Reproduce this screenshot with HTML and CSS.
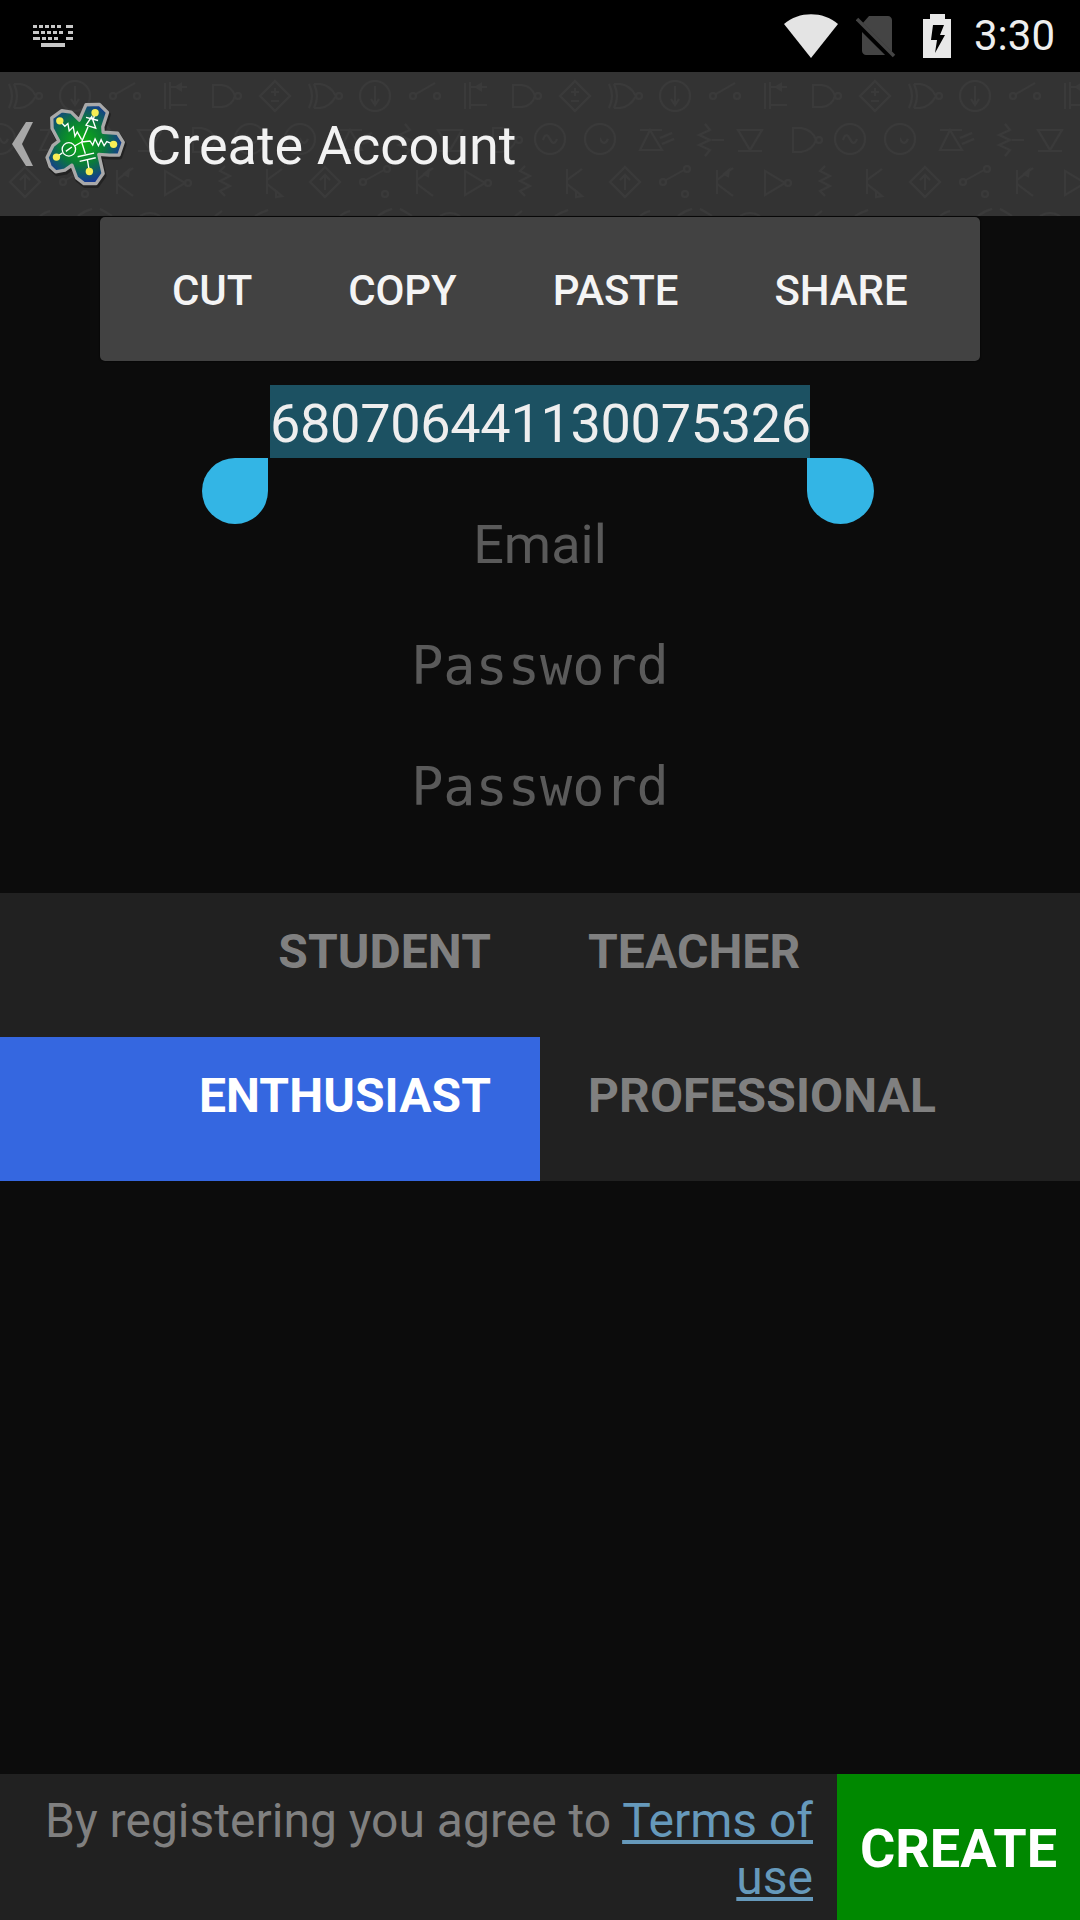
FILE: index.html
```html
<!DOCTYPE html>
<html lang="en">
<head>
<meta charset="utf-8">
<title>Create Account</title>
<link rel="stylesheet" href="styles.css">
</head>
<body>
<div class="screen">
  <div class="statusbar">
    <svg class="kbd" viewBox="0 0 40 22" width="40" height="22"><g fill="#c8c8c8"><rect x="0" y="0" width="4" height="3"/><rect x="6" y="0" width="4" height="3"/><rect x="12" y="0" width="4" height="3"/><rect x="18" y="0" width="4" height="3"/><rect x="24" y="0" width="4" height="3"/><rect x="33" y="0" width="7" height="3"/><rect x="0" y="6" width="6" height="3"/><rect x="8" y="6" width="4" height="3"/><rect x="14" y="6" width="4" height="3"/><rect x="20" y="6" width="4" height="3"/><rect x="26" y="6" width="4" height="3"/><rect x="35" y="6" width="5" height="3"/><rect x="0" y="12" width="7" height="3"/><rect x="9" y="12" width="4" height="3"/><rect x="15" y="12" width="4" height="3"/><rect x="21" y="12" width="4" height="3"/><rect x="33" y="12" width="7" height="3"/><rect x="8" y="18" width="24" height="4"/></g></svg>
    <div class="status-right">
      <svg class="wifi" viewBox="0 0 54 44" width="54" height="44"><path d="M0 10C15-3 39-3 54 10L27 44Z" fill="#e4e4e4"/></svg>
      <svg class="nosim" viewBox="0 0 40 42" width="40" height="42"><path d="M13 0H32C34 0 36 2 36 4V35C36 37 34 39 32 39H10C8 39 6 37 6 35V8Z" fill="#444"/><path d="M-1 4L37 42" stroke="#000" stroke-width="7"/><path d="M1 3L38 40" stroke="#444" stroke-width="3.500"/></svg>
      <svg class="batt" viewBox="0 0 28 44" width="28" height="44"><path d="M7 0H22V5H28V44H0V5H7Z" fill="#e8e8e8"/><path d="M10 11H21L17 21H22L12 39L14 26H8Z" fill="#000"/></svg>
      <span class="clock">3:30</span>
    </div>
  </div>

  <header class="appbar">
    <svg class="pattern" width="1080" height="144" viewBox="0 0 1080 144">
      <defs>
        <pattern id="circuit" width="300" height="144" patternUnits="userSpaceOnUse">
          <g fill="none" stroke="#3a3a3a" stroke-width="2">
            <!-- row 1 -->
            <path d="M9 12Q15 24 9 36M14 12Q20 24 14 36M14 12H20Q30 13 36 24Q30 35 20 36H14"/><circle cx="39" cy="24" r="3"/>
            <circle cx="75" cy="24" r="15"/><path d="M75 14V33M71 27L75 33L79 27"/>
            <circle cx="113" cy="24" r="3"/><path d="M116 22L135 11"/><circle cx="137" cy="24" r="3"/>
            <path d="M165 11V37M170 10V37M170 15H187M170 33H187M176 15L181 12V18Z"/>
            <path d="M213 13H222Q232 14 235 24Q232 34 222 35H213Z"/><circle cx="238" cy="24" r="3"/>
            <path d="M275 9L290 24L275 39L260 24ZM271 20H279M275 16V24M271 29H279"/>
            <!-- row 2 -->
            <circle cx="0" cy="67" r="15"/><circle cx="300" cy="67" r="15"/><path d="M-8 68Q-4 59 0 67T8 67"/>
            <path d="M243 68Q246 59 250 67T257 67"/><circle cx="250" cy="67" r="15"/>
            <path d="M40 78H62L50 58ZM40 58H62M60 66L72 61M62 72L74 67" />
            <path d="M105 52L110 58L99 63L110 68L99 73L110 78L105 84M112 68H124"/>
            <path d="M138 58H162L150 78ZM138 79H162"/>
            <path d="M193 56H201Q213 58 216 68Q213 78 201 80H193Z"/><circle cx="219" cy="68" r="3"/>
            <!-- row 3 -->
            <path d="M267 97V122M267 108L282 97M267 112L282 124M276 119L282 124L276 125Z"/>
            <path d="M25 95L40 110L25 125L10 110ZM25 118V103M20 108L25 103L30 108"/>
            <circle cx="63" cy="110" r="3"/><path d="M66 108L84 98"/><circle cx="87" cy="97" r="3"/><circle cx="85" cy="122" r="3"/>
            <path d="M117 98V122M117 108L133 96M117 112L133 124M124 102L129 98L128 104Z"/>
            <path d="M165 99V123L185 111Z"/><circle cx="188" cy="111" r="3"/>
            <path d="M225 94L220 99L230 104L220 109L230 114L220 119L225 124"/>
            <!-- row 4 -->
            <path d="M40 144Q45 140 50 139M78 144Q84 139 92 137M100 137Q106 140 112 144M140 144Q150 138 160 144M215 144L222 139M255 144Q262 140 268 138"/>
          </g>
        </pattern>
        <radialGradient id="logofill" gradientUnits="userSpaceOnUse" cx="245" cy="215" r="120">
          <stop offset="0" stop-color="#0fb50f"/><stop offset=".55" stop-color="#0a7d38"/><stop offset="1" stop-color="#153a90"/>
        </radialGradient>
      </defs>
      <rect width="1080" height="144" fill="url(#circuit)"/>
    </svg>
    <svg class="chevron" viewBox="0 0 21 44" width="21" height="44"><path d="M21 0H14L0 22L14 44H21L10 22Z" fill="#a8a8a8"/></svg>
    <svg class="logo" viewBox="130 90 250 262" width="84" height="88">
      <polygon class="logo-shadow" points="258,104 298,103 322,127 308,170 309,186 352,189 369,216 356,254 328,254 296,252 309,309 288,339 252,339 230,322 216,284 195,299 168,304 151,288 142,261 160,225 177,212 157,175 156,143 186,122 214,126 238,150"/>
      <polygon class="logo-body" points="258,104 298,103 322,127 308,170 309,186 352,189 369,216 356,254 328,254 296,252 309,309 288,339 252,339 230,322 216,284 195,299 168,304 151,288 142,261 160,225 177,212 157,175 156,143 186,122 214,126 238,150"/>
      <g class="logo-trace">
        <path d="M245 208L232 185L225 198L220 170L208 182L204 160L195 168L180 152"/>
        <path d="M258 165L275 140L287 174ZM258 142L294 151M245 215L264 170M280 148L285 128"/>
        <path d="M245 215L270 212L278 224L285 206L295 226L303 208L312 226L320 214L340 222"/>
        <circle cx="207" cy="237" r="20"/>
        <path d="M170 260L188 247M224 227L245 215M198 243L216 230"/>
        <path d="M245 215L256 250M233 259L282 248M239 273L287 262M262 267L268 303"/>
      </g>
      <g class="logo-dots"><circle cx="180" cy="152" r="11"/><circle cx="285" cy="128" r="11"/><circle cx="340" cy="222" r="11"/><circle cx="268" cy="303" r="11"/><circle cx="170" cy="260" r="11"/></g>
    </svg>
    <h1 class="title">Create Account</h1>
  </header>

  <main class="content">
    <div class="toolbar">
      <span class="tool">CUT</span>
      <span class="tool">COPY</span>
      <span class="tool">PASTE</span>
      <span class="tool">SHARE</span>
    </div>
    <form class="fields">
      <div class="field field-selected">
        <span class="selection">680706441130075326<i class="handle handle-left"></i><i class="handle handle-right"></i></span>
      </div>
      <div class="field hint">Email</div>
      <div class="field hint mono">Password</div>
      <div class="field hint mono">Password</div>
    </form>
    <div class="roles">
      <div class="role role-left">STUDENT</div>
      <div class="role role-right">TEACHER</div>
      <div class="role role-left role-on">ENTHUSIAST</div>
      <div class="role role-right">PROFESSIONAL</div>
    </div>
  </main>

  <footer class="footer">
    <p class="terms">By registering you agree to <a class="terms-link">Terms of use</a></p>
    <div class="create">CREATE</div>
  </footer>
</div>
</body>
</html>
```
FILE: styles.css
```css
* { box-sizing: border-box; }
html, body { margin: 0; padding: 0; background: #0c0c0c; }
body { font-family: Roboto, "Liberation Sans", sans-serif; }
.screen { width: 1080px; height: 1920px; display: flex; flex-direction: column; overflow: hidden; }

.statusbar { height: 72px; flex: none; background: #000; display: flex; align-items: center; justify-content: space-between; padding: 0 25px 0 33px; }
.status-right { display: flex; align-items: center; gap: 18px; }
.clock { color: #eee; font-size: 42px; margin-left: 4px; line-height: 72px; }
.nosim { margin-top: 2px; }
.batt { margin-left: 9px; margin-right: 1px; }

.appbar { position: relative; height: 144px; flex: none; background: #333; display: flex; align-items: center; padding: 0 0 0 12px; overflow: hidden; }
.pattern { position: absolute; left: 0; top: 0; }
.chevron, .logo, .title { position: relative; }
.logo { margin-left: 10px; }
.logo-shadow { fill: #1c1c1c; stroke: #1c1c1c; stroke-width: 14; stroke-linejoin: round; transform: translate(3px, 6px); opacity: .7; }
.logo-body { fill: url(#logofill); stroke: #a9a9a9; stroke-width: 10; stroke-linejoin: round; }
.logo-trace { fill: none; stroke: #fff; stroke-width: 4; }
.logo-dots { fill: #f6ee55; }
.title { margin: 4px 0 0 19px; color: #f2f2f2; font-size: 54px; font-weight: 400; line-height: 1; }

.content { position: relative; flex: 1; display: flex; flex-direction: column; }
.toolbar { position: absolute; left: 100px; top: 1px; width: 880px; height: 144px; background: #424242; border-radius: 5px; box-shadow: 0 0 2px #000; display: flex; align-items: center; padding: 2px 24px 0; z-index: 2; }
.tool { color: #f4f4f4; font-size: 42px; font-weight: 500; letter-spacing: -.1px; padding: 0 48px; white-space: nowrap; }

.fields { padding-top: 147px; display: flex; flex-direction: column; height: 677px; }
.field { height: 121px; display: flex; align-items: center; justify-content: center; font-size: 54px; color: #eee; }
.field-selected { align-items: flex-start; padding-top: 22px; }
.hint { color: #5a5a5a; }
.mono { font-family: "DejaVu Sans Mono", monospace; font-size: 53.500px; }
.selection { position: relative; background: #1c5162; height: 73px; line-height: 77px; width: 540px; text-align: center; letter-spacing: -.3px; white-space: nowrap; }
.handle { position: absolute; top: 73px; width: 66px; height: 66px; background: #33b5e5; }
.handle-left { left: -68px; border-radius: 50% 0 50% 50%; }
.handle-right { right: -64px; width: 67px; border-radius: 0 50% 50% 50%; }

.roles { display: grid; grid-template-columns: 540px 540px; grid-auto-rows: 144px; background: #212121; }
.role { display: flex; align-items: center; padding-bottom: 27px; color: #808080; font-size: 48px; font-weight: 700; letter-spacing: .1px; }
.role-left { justify-content: flex-end; padding-right: 49px; }
.role-right { padding-left: 48px; }
.role-on { background: #3567e0; color: #fff; }

.footer { flex: none; height: 146px; background: #212121; display: flex; }
.terms { flex: 1; margin: 0; padding: 18px 24px 0 40px; text-align: right; color: #808080; font-size: 48px; line-height: 57px; }
.terms-link { color: #6699bb; text-decoration: underline; }
.create { flex: none; width: 243px; padding-top: 2px; background: #008800; color: #fff; font-size: 54px; font-weight: 700; display: flex; align-items: center; justify-content: center; }
```
